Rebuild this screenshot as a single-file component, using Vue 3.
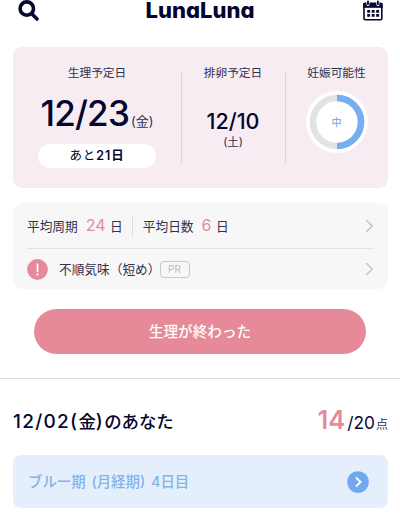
<script setup>
import { ref } from "vue";

const stats = ref([
  { label: "平均周期", value: 24 },
  { label: "平均日数", value: 6 },
]);
</script>

<template>
  <div class="page">
    <header class="header">
      <svg class="header__search" width="22" height="22" viewBox="0 0 22 22">
        <circle cx="8.8" cy="8.6" r="6.7" />
        <path d="M13.8 13.8L19 19" />
      </svg>
      <h1 class="header__logo">LunaLuna</h1>
      <svg class="header__calendar" width="20" height="21" viewBox="0 0 20 21">
        <rect x="1" y="3.2" width="17.8" height="16.6" rx="1.2" fill="none" stroke="#05052e" stroke-width="1.6" />
        <path d="M.3 3.2h19.3v4.6H.3z" fill="#05052e" />
        <path d="M5 1v3.6M14.9 1v3.6" stroke="#fff" stroke-width="3" stroke-linecap="round" />
        <path d="M5 1.3v2.9M14.9 1.3v2.9" stroke="#05052e" stroke-width="1.8" stroke-linecap="round" />
        <path d="M4.2 11.4h12M4.2 15.4h12" stroke="#05052e" stroke-width="2.7" stroke-dasharray="2.9 1.6" />
      </svg>
    </header>

    <section class="summary">
      <div class="summary__col">
        <p class="summary__title">生理予定日</p>
        <p class="summary__date">12/23<span>(金)</span></p>
        <p class="summary__left">あと<b>21日</b></p>
      </div>
      <div class="summary__col summary__col--line">
        <p class="summary__title">排卵予定日</p>
        <p class="summary__day">12/10</p>
        <p class="summary__week">(土)</p>
      </div>
      <div class="summary__col summary__col--line">
        <p class="summary__title">妊娠可能性</p>
        <div class="chart">
          <svg width="62" height="62" viewBox="0 0 62 62">
            <circle cx="31" cy="31" r="31" fill="#fff" />
            <circle cx="31" cy="31" r="24" fill="none" stroke="#e3e3e3" stroke-width="6.6" />
            <path d="M31 7a24 24 0 0 1 0 48" fill="none" stroke="#77adf1" stroke-width="6.6" />
          </svg>
          <span class="chart__label">中</span>
        </div>
      </div>
    </section>

    <section class="info">
      <div class="info__row">
        <p v-for="stat in stats" :key="stat.label" class="stat">
          {{ stat.label }}<span class="stat__value">{{ stat.value }}</span>日
        </p>
        <svg class="arrow" width="9" height="14" viewBox="0 0 9 14"><path d="M1 1l6.3 6L1 13" /></svg>
      </div>
      <div class="info__row info__row--alert">
        <svg class="alert" width="21" height="21" viewBox="0 0 21 21">
          <circle cx="10.5" cy="10.5" r="10.4" fill="#e68a99" />
          <path d="M10.5 5.2v7.1" stroke="#fff" stroke-width="1.7" stroke-linecap="round" />
          <circle cx="10.5" cy="15.5" r="1.1" fill="#fff" />
        </svg>
        <p class="info__text">不順気味（短め）</p>
        <span class="pr">PR</span>
        <svg class="arrow" width="9" height="14" viewBox="0 0 9 14"><path d="M1 1l6.3 6L1 13" /></svg>
      </div>
    </section>

    <button class="button">生理が終わった</button>

    <section class="today">
      <div class="today__head">
        <h2 class="today__title"><span>12/02(</span>金<span>)</span>のあなた</h2>
        <p class="score"><b>14</b><span class="score__max">/20</span><span class="score__unit">点</span></p>
      </div>
      <div class="phase">
        <p class="phase__text">ブルー期 (月経期) 4日目</p>
        <svg width="22" height="22" viewBox="0 0 22 22">
          <circle cx="11" cy="11" r="10.8" fill="#71a9f1" />
          <path d="M8.9 6.5l4.7 4.5-4.7 4.5" fill="none" stroke="#fff" stroke-width="1.8" />
        </svg>
      </div>
    </section>
  </div>
</template>

<style>
body {
  background: #fff;
}
</style>
<style scoped>
.page {
  height: 514px;
  color: #05052e;
  font-family: Inter, "Noto Sans CJK JP", sans-serif;
}

p,
h1,
h2 {
  margin: 0;
  white-space: nowrap;
}

svg {
  display: block;
  flex: none;
}

.header {
  display: flex;
  justify-content: space-between;
  align-items: flex-start;
  height: 47px;
  padding: 0 17px 0 18px;
  box-sizing: border-box;
}

.header__search {
  fill: none;
  stroke: #05052e;
  stroke-width: 3.6;
  stroke-linecap: round;
}

.header__logo {
  margin-right: 3px;
  font-size: 22px;
  line-height: 21px;
  font-weight: 800;
  font-feature-settings: "cv11";
}

.summary {
  display: grid;
  grid-template-columns: 168px 104px 103px;
  width: 375px;
  height: 141px;
  margin-left: 13px;
  padding: 24px 0;
  box-sizing: border-box;
  border-radius: 9px;
  background: #f6ecf2;
}

.summary__col {
  display: flex;
  flex-direction: column;
  align-items: center;
  height: 93px;
}

.summary__col--line {
  box-shadow: inset 1px 0 #dfd8df;
}

.summary__title {
  height: 22px;
  margin-top: -9px;
  font-size: 11.7px;
  line-height: 22px;
  color: #30304f;
}

.summary__date {
  margin-top: 8px;
  font-size: 35px;
  line-height: 42px;
  font-weight: 500;
  letter-spacing: -0.8px;
}

.summary__date span {
  margin-left: 2px;
  font-size: 13px;
  font-weight: 400;
  letter-spacing: 0;
  color: #30304f;
}

.summary__left {
  width: 118px;
  height: 24px;
  margin-top: 2px;
  border-radius: 12px;
  background: #fff;
  font-size: 12.5px;
  line-height: 24px;
  letter-spacing: 0.9px;
  text-align: center;
}

.summary__left b {
  font-weight: 600;
}

.summary__day {
  margin-top: 23px;
  font-size: 21.5px;
  line-height: 28px;
  font-weight: 500;
}

.summary__week {
  font-size: 11.4px;
  line-height: 15px;
  color: #30304f;
}

.chart {
  display: grid;
  place-items: center;
  margin-top: 7px;
}

.chart > * {
  grid-area: 1 / 1;
}

.chart__label {
  font-size: 10px;
  line-height: 12px;
  font-weight: 500;
  color: #77adf1;
}

.info {
  width: 375px;
  height: 86px;
  margin: 15px 0 0 13px;
  padding: 0 14px;
  box-sizing: border-box;
  border-radius: 9px;
  background: #f7f7f7;
}

.info__row {
  display: flex;
  align-items: center;
  height: 45px;
  font-size: 12.7px;
  color: #30304f;
}

.info__row--alert {
  height: 41px;
  border-top: 1px solid #e1e1e7;
  box-sizing: border-box;
}

.stat {
  line-height: 20px;
}

.stat + .stat {
  margin-left: 9px;
  padding-left: 10px;
  border-left: 1px solid #dcdce2;
}

.stat__value {
  margin: 0 4.5px 0 8px;
  font-size: 16px;
  color: #e48c9c;
}

.arrow {
  margin-left: auto;
  fill: none;
  stroke: #c3c3c5;
  stroke-width: 1.4;
}

.info__text {
  margin: -2px 0 0 11px;
}

.pr {
  width: 30px;
  height: 17px;
  margin-left: -1px;
  box-sizing: border-box;
  border: 1px solid #c9c9cb;
  border-radius: 4px;
  font-size: 10px;
  line-height: 15px;
  text-align: center;
  color: #b9b9bc;
}

.button {
  display: block;
  width: 332px;
  height: 45px;
  margin: 20px 0 0 34px;
  padding: 2px 0 0;
  border: 0;
  border-radius: 23px;
  background: #e68a99;
  color: #fff;
  font: 500 14.6px/43px Inter, "Noto Sans CJK JP", sans-serif;
}

.today {
  margin-top: 24px;
  padding: 0 12px 0 13px;
  border-top: 1px solid #dedede;
}

.today__head {
  display: flex;
  align-items: center;
  justify-content: space-between;
  height: 76px;
  padding-top: 10px;
  box-sizing: border-box;
}

.today__title {
  margin-top: -3px;
  font-size: 17.4px;
  font-weight: 500;
}

.today__title span {
  font-size: 19px;
  letter-spacing: 1.3px;
}

.score {
  display: flex;
  align-items: baseline;
  line-height: 30px;
}

.score b {
  margin-right: -1px;
  font-size: 25.5px;
  font-weight: 600;
  color: #e48c9c;
}

.score__max {
  margin-left: 3px;
  font-size: 17.3px;
}

.score__unit {
  margin-left: 1px;
  font-size: 12px;
  color: #30304f;
}

.phase {
  display: flex;
  align-items: center;
  justify-content: space-between;
  height: 53px;
  padding: 0 19px 0 15px;
  border-radius: 8px;
  background: #e5effc;
}

.phase__text {
  margin-top: -2px;
  font-size: 14.4px;
  font-weight: 500;
  word-spacing: 2px;
  color: #82b3ec;
}
</style>
